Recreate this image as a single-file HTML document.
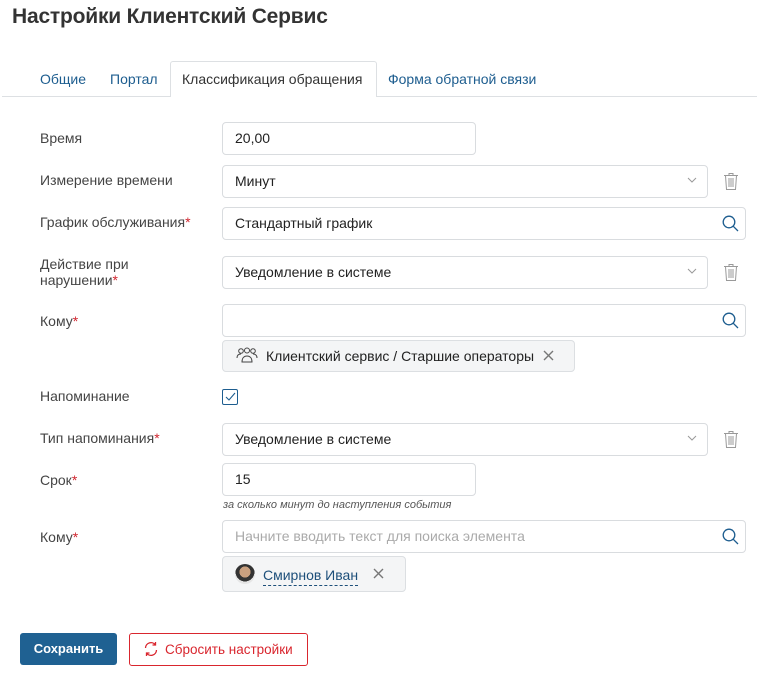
<!DOCTYPE html>
<html><head><meta charset="utf-8"><style>
*{box-sizing:border-box;margin:0;padding:0}
body{width:757px;height:674px;background:#fff;font-family:"Liberation Sans",sans-serif;color:#333;position:relative;overflow:hidden;font-size:14px}
.a{position:absolute}
.lbl{position:absolute;left:40px;font-size:14px;color:#444;line-height:16px}
.req{color:#d0262f}
.inp{position:absolute;left:222px;height:33px;border:1px solid #d9dcdf;border-radius:4px;background:#fff;padding:0 12px;line-height:31px;font-size:14px;color:#222}
.chip{position:absolute;left:222px;background:#f4f5f6;border:1px solid #dcdfe2;border-radius:4px;font-size:14px;color:#222}
.tab{position:absolute;top:61px;height:36px;line-height:36px;font-size:14px;color:#1d5d8f}
</style></head><body>
<div class="a" style="left:12px;top:5px;font-size:21px;color:#333;font-weight:bold;letter-spacing:-0.2px">Настройки Клиентский Сервис</div>
<div class="a" style="left:2px;top:96px;width:755px;height:1px;background:#dde0e3"></div>
<div class="tab" style="left:40px">Общие</div>
<div class="tab" style="left:110px">Портал</div>
<div class="a" style="left:170px;top:61px;width:207px;height:36px;border:1px solid #dde0e3;border-bottom:none;border-radius:3px 3px 0 0;background:#fff;color:#333;line-height:34px;font-size:14px;padding-left:11px">Классификация обращения</div>
<div class="tab" style="left:388px">Форма обратной связи</div>

<div class="lbl" style="top:130px">Время</div>
<div class="inp" style="top:122px;width:254px">20,00</div>

<div class="lbl" style="top:172px">Измерение времени</div>
<div class="inp" style="top:165px;width:486px">Минут</div>

<div class="lbl" style="top:214px">График обслуживания<span class="req">*</span></div>
<div class="inp" style="top:207px;width:524px">Стандартный график</div>

<div class="lbl" style="top:256px">Действие при<br>нарушении<span class="req">*</span></div>
<div class="inp" style="top:256px;width:486px">Уведомление в системе</div>

<div class="lbl" style="top:313px">Кому<span class="req">*</span></div>
<div class="inp" style="top:304px;width:524px"></div>
<div class="chip" style="top:340px;width:353px;height:32px;line-height:30px;padding-left:43px">Клиентский сервис / Старшие операторы</div>
<svg class="a" style="left:236px;top:347px" width="22" height="16" viewBox="0 0 22 16" fill="none" stroke="#444" stroke-width="1"><circle cx="5" cy="4" r="2.3"/><circle cx="11" cy="3.5" r="2.5"/><circle cx="17" cy="4" r="2.3"/><path d="M1 11c0-3 2-4 4-4M21 11c0-3-2-4-4-4M6 15c0-4 2-6 5-6s5 2 5 6z"/></svg>
<svg class="a" style="left:543px;top:350px" width="11" height="11" stroke="#777" stroke-width="1.4"><path d="M1 1l9 9M10 1l-9 9"/></svg>

<div class="lbl" style="top:388px">Напоминание</div>
<div class="a" style="left:222px;top:389px;width:16px;height:16px;border:1px solid #1d5d8f;border-radius:2px"></div>
<svg class="a" style="left:224px;top:391px" width="12" height="12" fill="none" stroke="#1d5d8f" stroke-width="1.1"><path d="M2 6l3 3 6-7"/></svg>

<div class="lbl" style="top:430px">Тип напоминания<span class="req">*</span></div>
<div class="inp" style="top:423px;width:486px">Уведомление в системе</div>

<div class="lbl" style="top:472px">Срок<span class="req">*</span></div>
<div class="inp" style="top:463px;width:254px">15</div>
<div class="a" style="left:223px;top:499px;font-size:11px;font-style:italic;color:#555">за сколько минут до наступления события</div>

<div class="lbl" style="top:529px">Кому<span class="req">*</span></div>
<div class="inp" style="top:520px;width:524px;color:#aaa">Начните вводить текст для поиска элемента</div>
<div class="chip" style="top:556px;width:184px;height:36px"></div>
<div class="a" style="left:235px;top:564px;width:20px;height:20px;border-radius:50%;background:radial-gradient(circle at 50% 40%,#c9a07f 0 35%,#333 36% 60%,#e5e5e5 61%)"></div>
<div class="a" style="left:263px;top:566px;font-size:14px;color:#1d4f7a;border-bottom:1px dashed #1d4f7a;line-height:19px">Смирнов Иван</div>
<svg class="a" style="left:373px;top:568px" width="11" height="11" stroke="#777" stroke-width="1.4"><path d="M1 1l9 9M10 1l-9 9"/></svg>

<svg class="a" style="left:687px;top:177px" width="10" height="6" fill="none" stroke="#999"><path d="M1 1l4 4 4-4"/></svg>
<svg class="a" style="left:687px;top:268px" width="10" height="6" fill="none" stroke="#999"><path d="M1 1l4 4 4-4"/></svg>
<svg class="a" style="left:687px;top:435px" width="10" height="6" fill="none" stroke="#999"><path d="M1 1l4 4 4-4"/></svg>
<svg class="a" style="left:723px;top:172px" width="16" height="18" fill="none" stroke="#999" stroke-width="1"><path d="M1 3.5h14M6 3.5V1.5h4v2M2.5 3.5l1 14h9l1-14M6 6v9M8 6v9M10 6v9"/></svg>
<svg class="a" style="left:723px;top:263px" width="16" height="18" fill="none" stroke="#999" stroke-width="1"><path d="M1 3.5h14M6 3.5V1.5h4v2M2.5 3.5l1 14h9l1-14M6 6v9M8 6v9M10 6v9"/></svg>
<svg class="a" style="left:723px;top:430px" width="16" height="18" fill="none" stroke="#999" stroke-width="1"><path d="M1 3.5h14M6 3.5V1.5h4v2M2.5 3.5l1 14h9l1-14M6 6v9M8 6v9M10 6v9"/></svg>
<svg class="a" style="left:722px;top:215px" width="17" height="17" fill="none" stroke="#1d5d8f" stroke-width="1.3"><circle cx="7" cy="7" r="5.8"/><path d="M11.3 11.3l4.7 4.7"/></svg>
<svg class="a" style="left:722px;top:312px" width="17" height="17" fill="none" stroke="#1d5d8f" stroke-width="1.3"><circle cx="7" cy="7" r="5.8"/><path d="M11.3 11.3l4.7 4.7"/></svg>
<svg class="a" style="left:722px;top:528px" width="17" height="17" fill="none" stroke="#1d5d8f" stroke-width="1.3"><circle cx="7" cy="7" r="5.8"/><path d="M11.3 11.3l4.7 4.7"/></svg>

<div class="a" style="left:20px;top:633px;width:97px;height:32px;background:#1f6192;border-radius:3px;color:#fff;font-size:13px;font-weight:bold;text-align:center;line-height:32px">Сохранить</div>
<div class="a" style="left:129px;top:633px;width:179px;height:33px;border:1px solid #d9262e;border-radius:3px;color:#d9262e;font-size:13.5px;line-height:31px;padding-left:35px">Сбросить настройки</div>
<svg class="a" style="left:143px;top:641px" width="16" height="16" fill="none" stroke="#d9262e" stroke-width="1.3"><path d="M2.5 7a5.5 5.5 0 0 1 10-3M13.5 9a5.5 5.5 0 0 1-10 3M12.5 1v3h-3M3.5 15v-3h3"/></svg>
</body></html>
